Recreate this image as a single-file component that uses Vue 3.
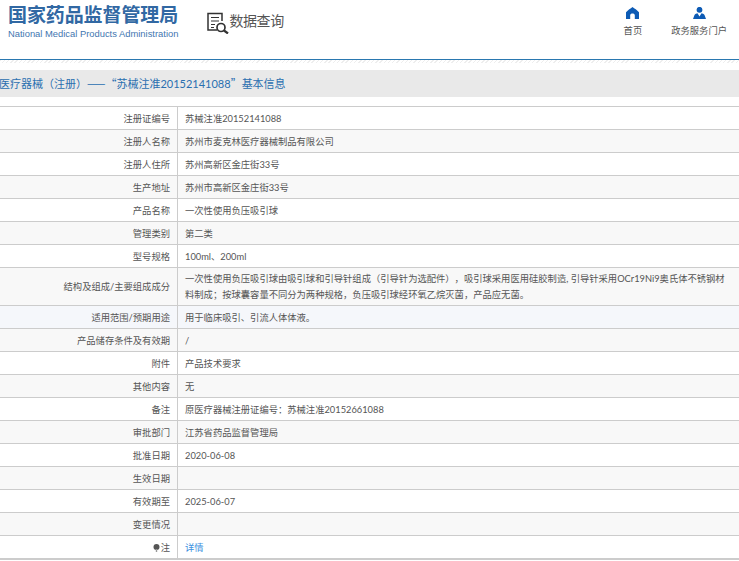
<script setup>
const rows = [
  { label: '注册证编号', value: '苏械注准20152141088' },
  { label: '注册人名称', value: '苏州市麦克林医疗器械制品有限公司' },
  { label: '注册人住所', value: '苏州高新区金庄街33号' },
  { label: '生产地址', value: '苏州市高新区金庄街33号' },
  { label: '产品名称', value: '一次性使用负压吸引球' },
  { label: '管理类别', value: '第二类' },
  { label: '型号规格', value: '100ml、200ml' },
  {
    label: '结构及组成/主要组成成分',
    value: '一次性使用负压吸引球由吸引球和引导针组成（引导针为选配件），吸引球采用医用硅胶制造, 引导针采用OCr19Ni9奥氏体不锈钢材料制成；按球囊容量不同分为两种规格，负压吸引球经环氧乙烷灭菌，产品应无菌。',
    tall: true,
  },
  { label: '适用范围/预期用途', value: '用于临床吸引、引流人体体液。', tint: true },
  { label: '产品储存条件及有效期', value: '/' },
  { label: '附件', value: '产品技术要求' },
  { label: '其他内容', value: '无' },
  { label: '备注', value: '原医疗器械注册证编号：苏械注准20152661088' },
  { label: '审批部门', value: '江苏省药品监督管理局' },
  { label: '批准日期', value: '2020-06-08' },
  { label: '生效日期', value: '' },
  { label: '有效期至', value: '2025-06-07' },
  { label: '变更情况', value: '' },
]
</script>

<template>
  <div class="page">
    <header class="head">
      <div class="logo">
        <div class="logo-cn">国家药品监督管理局</div>
        <div class="logo-en">National Medical Products Administration</div>
      </div>
      <div class="query">
        <svg class="query-icon" viewBox="0 0 22 22" width="22" height="22" fill="none" stroke="#333">
          <path d="M10 18H1V1.500h14V9" stroke-width="1.500" />
          <path d="M4 5.500h8M4 9h8M4 12.500h4M4 15.500h3" stroke-width="1.200" />
          <circle cx="14" cy="15.500" r="4" stroke-width="1.700" />
          <path d="M17 18.500l4 3" stroke-width="2.200" />
        </svg>
        <span>数据查询</span>
      </div>
      <nav class="nav">
        <div class="nav-item home">
          <svg viewBox="0 0 13 12" width="13" height="12">
            <path fill="#0d5bb5" d="M6.500 0C8.500 1.600 11 3 13 5.200V12H8.800V8.200C8.800 6 4.200 6 4.200 8.200V12H0V5.200C2 3 4.500 1.600 6.500 0Z" />
          </svg>
          <span>首页</span>
        </div>
        <div class="nav-item portal">
          <svg viewBox="0 0 13 12" width="13" height="12">
            <circle fill="#0d5bb5" cx="6.500" cy="2.800" r="2.900" />
            <path fill="#0d5bb5" d="M0 12 1.500 8C2.200 7 3.500 6.500 4.500 6.300L6.500 9.500 8.500 6.300C9.500 6.500 10.800 7 11.500 8L13 12Z" />
          </svg>
          <span>政务服务门户</span>
        </div>
      </nav>
    </header>
    <div class="rule"></div>
    <h2 class="title">医疗器械（注册）<span class="cjk">——“</span>苏械注准20152141088<span class="cjk">”</span>基本信息</h2>
    <table class="info">
      <tbody>
        <tr v-for="row in rows" :key="row.label" :class="{ tall: row.tall, tint: row.tint }">
          <td class="key">{{ row.label }}</td>
          <td class="val">{{ row.value }}</td>
        </tr>
        <tr class="last">
          <td class="key">
            <svg class="pin" viewBox="0 0 7 8" width="7" height="8">
              <circle cx="3.500" cy="3" r="3" fill="#555" />
              <rect x="2.800" y="5" width="1.400" height="3" fill="#999" />
            </svg>注
          </td>
          <td class="val"><a class="link">详情</a></td>
        </tr>
      </tbody>
    </table>
  </div>
</template>

<style>
html, body { background: #fff; }
</style>

<style scoped>
.page {
  width: 739px;
  height: 561px;
  overflow: hidden;
  font-family: Lato, "Noto Sans CJK SC", sans-serif;
  font-size: 9.3px;
  color: #555;
  text-spacing-trim: space-all;
}

.head {
  display: flex;
  height: 59px;
  box-sizing: border-box;
  padding: 4px 0 0 8px;
}

.logo-cn {
  font-size: 19px;
  line-height: 22px;
  font-weight: 700;
  letter-spacing: -0.1px;
  color: #3168a3;
  white-space: nowrap;
}

.logo-en {
  margin-top: 2px;
  font-family: "Liberation Sans", sans-serif;
  font-size: 9.4px;
  line-height: 11px;
  color: #3f76b0;
  white-space: nowrap;
}

.query {
  display: flex;
  align-items: flex-start;
  margin-left: 29px;
  padding-top: 8px;
  font-size: 14px;
  line-height: 18px;
  letter-spacing: -0.4px;
  color: #555;
  white-space: nowrap;
}

.nav {
  display: flex;
  margin-left: auto;
  padding-top: 3px;
}

.nav-item {
  display: flex;
  flex-direction: column;
  align-items: center;
  gap: 4px;
  white-space: nowrap;
}

.home {
  margin-right: 29px;
}

.portal {
  margin-right: 12px;
}

.rule {
  height: 10px;
  border-top: 1px solid #2a78b0;
  background: repeating-linear-gradient(135deg, #eee 0, #eee 1px, #fff 1px, #fff 3px) no-repeat;
  background-size: 100% 3px;
}

.title {
  margin: 0 0 9px;
  height: 27px;
  line-height: 27px;
  text-indent: -1px;
  background: #e9e9e9;
  font-size: 11px;
  font-weight: 400;
  color: #2a6fb0;
  white-space: nowrap;
}

.cjk {
  font-family: "Noto Sans CJK SC", sans-serif;
}

.info {
  width: 739px;
  border-collapse: collapse;
  table-layout: fixed;
  border-top: 1px solid #ccc;
}

.info tr {
  height: 23px;
  border-bottom: 1px solid #ccc;
}

.info tr:nth-child(even) {
  background: #f8f8f8;
}

.info tr.tall {
  height: 38px;
}

.info tr.tint {
  background: #f5f7fb;
}

.info tr.last {
  border-bottom-width: 2px;
}

.info tr.last td {
  padding-top: 3px;
}

.info td {
  padding: 1px 7px 0;
  line-height: 16px;
}

.key {
  width: 163px;
  text-align: right;
  border-right: 1px solid #ccc;
}

.val {
  padding-right: 8px;
}

.pin {
  margin-right: 1px;
  vertical-align: -1px;
}

.link {
  color: #3c8fe0;
}
</style>
